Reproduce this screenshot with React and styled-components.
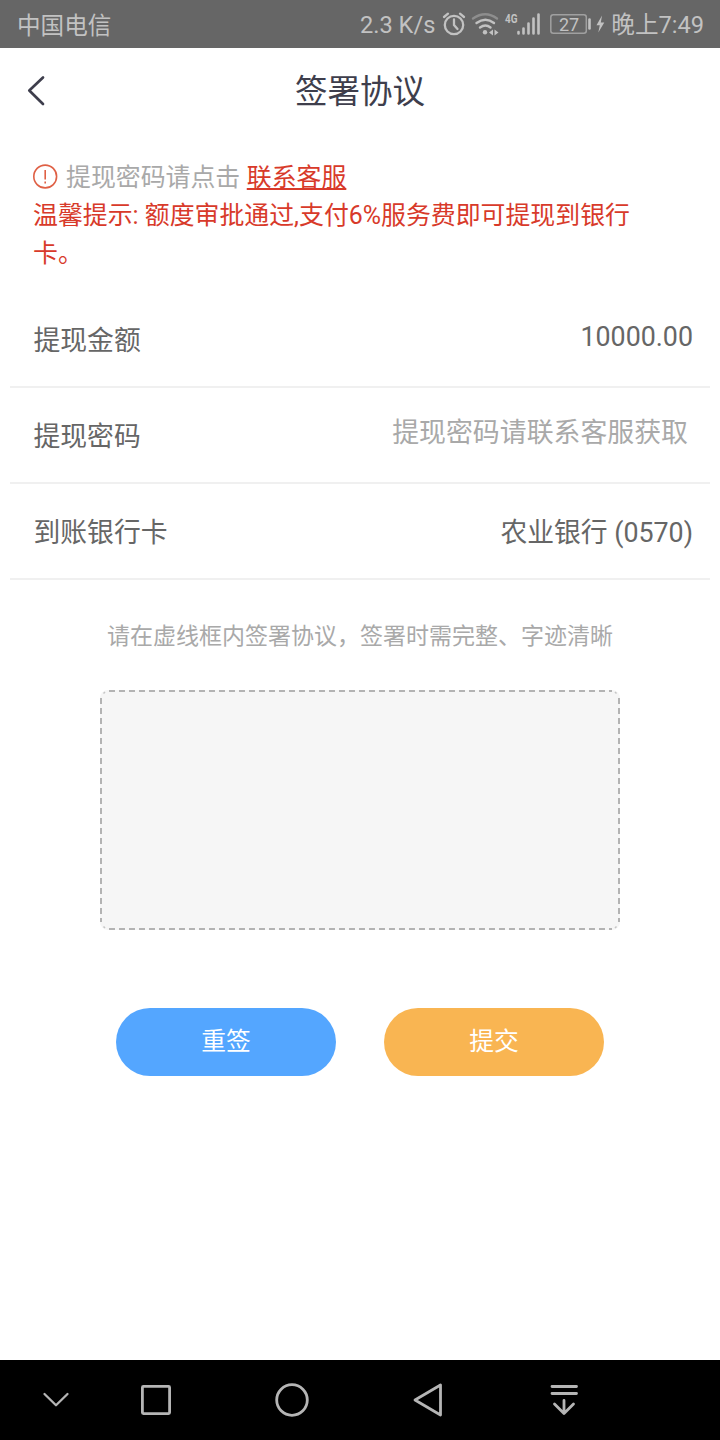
import styled, { createGlobalStyle } from "styled-components"

const GlobalStyle = createGlobalStyle`
    *{
        box-sizing:border-box;
    }
    body{
        margin:0;
        background-color:white;
        font-family:Roboto,"Noto Sans CJK SC",sans-serif;
    }
`;
const Container = styled.div`
    width:720px;
    height:1440px;
    display:flex;
    flex-direction:column;
    background-color:white;
    white-space:nowrap;
    overflow:hidden;
`;
const StatusBar = styled.div`
    height:48px;
    padding:0px 16px 0px 17px;
    display:flex;
    align-items:center;
    justify-content:space-between;
    background-color:#666666;
    color:#c2c2c2;
    font-size:23.6px;
    line-height:48px;
`;
const StatusRight = styled.div`
    display:flex;
    align-items:center;
`;
const StatusText = styled.span`
    padding-top:${props => props.$top || 3}px;
    line-height:45px;
`;
const StatusIcons = styled.svg`
    margin:0px 4px 0px 6px;
    flex:none;
`;
const Header = styled.div`
    height:84px;
    display:grid;
    grid-template-columns:100px 1fr 100px;
    align-items:center;
`;
const Back = styled.svg`
    margin:2px 0px 0px 22px;
`;
const Title = styled.h1`
    margin:0px;
    padding-top:4px;
    text-align:center;
    font-size:32.5px;
    font-weight:400;
    line-height:80px;
    color:#3e3e4c;
`;
const Notice = styled.div`
    height:160px;
    padding:27px 33px 0px;
    font-size:24.9px;
    line-height:38px;
    color:#d83a2a;
`;
const NoticeLine = styled.div`
    display:flex;
    align-items:center;
    color:#a9a9a9;
`;
const NoticeIcon = styled.svg`
    margin:0px 8px 2px 0px;
    flex:none;
`;
const Link = styled.a`
    margin-left:6.5px;
    color:#d83a2a;
    text-decoration:underline;
    text-decoration-thickness:2px;
    text-underline-offset:2px;
`;
const Tip = styled.p`
    margin:0px;
    width:610px;
    white-space:normal;
`;
const Row = styled.div`
    height:96px;
    margin:0px 10px;
    padding:0px 17px 0px 23.5px;
    display:flex;
    justify-content:space-between;
    border-bottom:2px solid #f0f0f0;
    font-size:26.8px;
    line-height:99px;
    color:#666666;
`;
const Value = styled.span`
    padding-right:${props => props.$placeholder ? 5 : 0}px;
    font-size:${props => props.$placeholder ? 26.9 : 26.8}px;
    line-height:${props => props.$lineHeight || 98}px;
    color:${props => props.$placeholder ? "#a9a9a9" : "#666666"};
`;
const Hint = styled.p`
    margin:37px 0px 33px;
    text-align:center;
    font-size:23px;
    line-height:40px;
    color:#a9a9a9;
`;
const SignBox = styled.div`
    width:520px;
    height:240px;
    margin:0px auto;
    flex:none;
`;
const Buttons = styled.div`
    margin-top:78px;
    display:flex;
    justify-content:center;
    gap:48px;
`;
const Button = styled.button`
    width:220px;
    height:68px;
    padding:0px;
    border:none;
    border-radius:34px;
    background-color:${props => props.$color};
    color:#ffffff;
    font-family:inherit;
    font-size:24.8px;
    line-height:68px;
`;
const NavBar = styled.div`
    height:80px;
    margin-top:auto;
    background-color:black;
`;

const App = () => {
    return (
        <Container>
            <GlobalStyle />
            <StatusBar>
                <StatusText $top={4}>中国电信</StatusText>
                <StatusRight>
                    <StatusText>2.3 K/s</StatusText>
                    <StatusIcons width="166" height="48" viewBox="441 0 166 48" fill="none" stroke="#c2c2c2" strokeLinecap="round">
                        {/* alarm */}
                        <circle cx="454" cy="25" r="9.2" strokeWidth="2.3" />
                        <path d="M454 19.5V25l3.5 4M444 17l4-3.3M464 17l-4-3.3" strokeWidth="2.3" />
                        {/* wifi */}
                        <path d="M473 18.5Q485.5 10 497 18.5" stroke="#8e8e8e" strokeWidth="2.4" />
                        <path d="M476.5 23Q485.5 16.5 494 23M480 27.5Q485.5 23.5 490.5 27.5" strokeWidth="2.4" />
                        <circle cx="485" cy="32.3" r="2.2" fill="#c2c2c2" stroke="none" />
                        <path d="M493 29.5v6l-4-3zM494.5 29.5v6l4-3z" fill="#c2c2c2" stroke="none" />
                        {/* mobile signal */}
                        <text x="505" y="23" fill="#c2c2c2" stroke="none" fontSize="13.5" fontWeight="700" textLength="12.5" lengthAdjust="spacingAndGlyphs">4G</text>
                        <path d="M518.5 32v1.5M523.5 28.5v5M528.5 23.5v10M533.5 18.5v15M538.5 14.5v19" strokeWidth="2.6" />
                        {/* battery */}
                        <rect x="550.8" y="14.8" width="35.5" height="18.5" rx="2.5" stroke="#a0a0a0" strokeWidth="1.5" />
                        <text x="559" y="30.5" fill="#c2c2c2" stroke="none" fontSize="18">27</text>
                        <path d="M589.5 19.5v9" strokeWidth="2.6" />
                        <path d="M602 15.5l-5.5 9.7h3.3l-1.5 7.3 6-10h-3.5z" fill="#c2c2c2" stroke="none" />
                    </StatusIcons>
                    <StatusText>晚上7:49</StatusText>
                </StatusRight>
            </StatusBar>
            <Header>
                <Back width="28" height="36" viewBox="22 73 28 36" fill="none" stroke="#3e3e4c" strokeWidth="2.7" strokeLinecap="round" strokeLinejoin="round">
                    <path d="M43 77.5L29.3 90.5L43 104" />
                </Back>
                <Title>签署协议</Title>
            </Header>
            <Notice>
                <NoticeLine>
                    <NoticeIcon width="25" height="26" viewBox="0 0 25 26" fill="none" stroke="#df6045">
                        <circle cx="12.2" cy="12.5" r="11.4" strokeWidth="1.6" />
                        <path d="M12.2 6v9.5M12.2 17.5v2" strokeWidth="1.6" />
                    </NoticeIcon>
                    提现密码请点击
                    <Link>联系客服</Link>
                </NoticeLine>
                <Tip>温馨提示: 额度审批通过,支付6%服务费即可提现到银行卡。</Tip>
            </Notice>
            <Row>
                <span>提现金额</span>
                <Value $lineHeight={90}>10000.00</Value>
            </Row>
            <Row>
                <span>提现密码</span>
                <Value $placeholder $lineHeight={91}>提现密码请联系客服获取</Value>
            </Row>
            <Row>
                <span>到账银行卡</span>
                <Value>农业银行 (0570)</Value>
            </Row>
            <Hint>请在虚线框内签署协议，签署时需完整、字迹清晰</Hint>
            <SignBox>
                <svg width="520" height="240" display="block">
                    <rect width="520" height="240" rx="8" fill="#f6f6f6" />
                    <path d="M8 1H512M8 239H512" stroke="#b3b3b3" strokeWidth="2" strokeDasharray="6 4" strokeDashoffset="-1" />
                    <path d="M1 8V232M519 8V232" stroke="#b3b3b3" strokeWidth="2" strokeDasharray="6 4" />
                    <path d="M3.5 3.5L5 2M515 2L516.5 3.5M3.5 236.5L5 238M515 238L516.5 236.5" stroke="#c6c6c6" strokeWidth="1.5" />
                </svg>
            </SignBox>
            <Buttons>
                <Button $color="#54a6ff">重签</Button>
                <Button $color="#f9b552">提交</Button>
            </Buttons>
            <NavBar>
                <svg width="720" height="80" fill="none" stroke="#b5b5b5" strokeWidth="2.8" strokeLinecap="round" strokeLinejoin="round">
                    <path d="M44.5 34L56 45.3L67.5 34" strokeWidth="2.3" />
                    <rect x="142.4" y="26.4" width="27.2" height="27.2" rx="1" />
                    <circle cx="292" cy="40" r="15.3" />
                    <path d="M440.5 25V55L415 40Z" />
                    <path d="M552 26.5h24.5M552 33.5h24.5M564 40.5v13M554.5 44L564 53.5L573.5 44" />
                </svg>
            </NavBar>
        </Container>
    )
}

export default App
